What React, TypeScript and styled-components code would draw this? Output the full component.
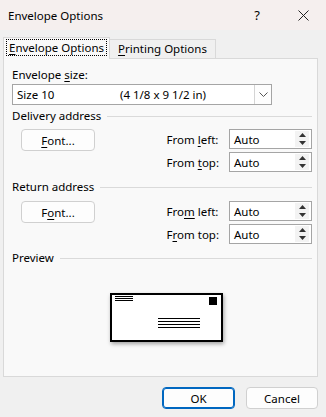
import React from 'react';
import styled, { createGlobalStyle } from 'styled-components';

const GlobalStyle = createGlobalStyle`
  html, body {
    margin: 0;
    padding: 0;
    background: #f0f0f0;
  }
  * {
    box-sizing: border-box;
  }
`;

const Window = styled.div`
  width: 326px;
  height: 417px;
  background: #f0f0f0;
  font-family: "Noto Sans", "Open Sans", sans-serif;
  font-size: 11.5px;
  color: #000;
  display: flex;
  flex-direction: column;
  overflow: hidden;
`;

const TitleBar = styled.div`
  height: 30px;
  flex: none;
  display: flex;
  align-items: center;
  background: #f5efee;
  padding-left: 8px;
`;

const Title = styled.div`
  flex: 1;
  font-size: 11.5px;
`;

const TitleButton = styled.div`
  width: 46px;
  height: 30px;
  display: flex;
  align-items: center;
  justify-content: center;
  font-size: 13px;
`;

const Body = styled.div`
  flex: 1;
  display: flex;
  flex-direction: column;
  padding: 7px 8px 0 3px;
`;

const TabStrip = styled.div`
  display: flex;
  align-items: flex-end;
  height: 21px;
  position: relative;
  z-index: 1;
`;

const Tab = styled.div<{ $active?: boolean }>`
  height: ${p => (p.$active ? '22px' : '19px')};
  margin-bottom: ${p => (p.$active ? '-1px' : '0')};
  padding: ${p => (p.$active ? '2px 3px 0 3px' : '1px 6px 0 6px')};
  border: 1px solid #d9d9d9;
  border-bottom: none;
  border-left: ${p => (p.$active ? '1px solid #d9d9d9' : 'none')};
  background: ${p => (p.$active ? '#f9f9f9' : '#f0f0f0')};
  display: flex;
  align-items: flex-start;
`;

const TabLabel = styled.span<{ $focus?: boolean }>`
  padding: 0 2px;
  line-height: 15px;
  outline: ${p => (p.$focus ? '1px dotted #000' : 'none')};
`;

const Key = styled.span`
  text-decoration: underline;
  text-underline-offset: 2px;
`;

const Panel = styled.div`
  height: 319px;
  border: 1px solid #d9d9d9;
  background: #f9f9f9;
  padding: 8px 5px 0 8px;
  display: flex;
  flex-direction: column;
`;

const Label = styled.div`
  line-height: 16px;
  height: 16px;
`;

const Select = styled.div`
  margin-top: 1px;
  width: 260px;
  height: 21px;
  border: 1px solid #a5a5a5;
  background: #fff;
  display: flex;
  align-items: center;
  padding-left: 4px;
`;

const SelectText = styled.div<{ $width?: number }>`
  width: ${p => (p.$width ? `${p.$width}px` : 'auto')};
  flex: ${p => (p.$width ? 'none' : '1')};
  white-space: nowrap;
`;

const DropButton = styled.div`
  width: 17px;
  height: 19px;
  border-left: 1px solid #d4d4d4;
  background: #fdfdfd;
  display: flex;
  align-items: center;
  justify-content: center;
`;

const GroupHeader = styled.div<{ $top: number }>`
  margin-top: ${p => p.$top}px;
  height: 16px;
  line-height: 16px;
  display: flex;
  align-items: center;
  gap: 6px;

  &::after {
    content: '';
    flex: 1;
    height: 1px;
    background: #dadada;
  }
`;

const Section = styled.div<{ $top: number }>`
  margin-top: ${p => p.$top}px;
  display: flex;
  justify-content: space-between;
  align-items: flex-start;
`;

const PushButton = styled.div<{ $primary?: boolean; $width?: number }>`
  width: ${p => p.$width ?? 74}px;
  height: 22px;
  border: 1px solid ${p => (p.$primary ? '#0067c0' : '#d0d0d0')};
  border-radius: 4px;
  background: #fdfdfd;
  display: flex;
  align-items: center;
  justify-content: center;
  box-shadow: ${p => (p.$primary ? 'inset 0 0 0 1px #0067c0' : 'none')};
`;

const FontButton = styled(PushButton)`
  margin-left: 9px;
`;

const SpinGrid = styled.div`
  display: grid;
  grid-template-columns: auto 83px;
  column-gap: 10px;
  row-gap: 3px;
  align-items: center;
`;

const SpinLabel = styled.div`
  white-space: nowrap;
`;

const SpinBox = styled.div`
  height: 20px;
  border: 1px solid #a5a5a5;
  background: #fff;
  display: flex;
  align-items: center;
  padding-left: 4px;
`;

const SpinText = styled.div`
  flex: 1;
`;

const SpinArrows = styled.div`
  width: 14px;
  height: 16px;
  margin-right: 2px;
  background: #f3f3f3;
  display: flex;
  flex-direction: column;
  align-items: center;
  justify-content: space-around;
`;

const Preview = styled.div`
  margin-top: 27px;
  margin-left: 98px;
  width: 113px;
  height: 49px;
  border: 2px solid #000;
  background: #fff;
  box-shadow: 1px 2px 4px rgba(0, 0, 0, 0.35);
`;

const Footer = styled.div`
  display: flex;
  justify-content: flex-end;
  gap: 11px;
  padding-top: 10px;
`;

const UpDown: React.FC = () => (
  <SpinArrows>
    <svg width="7" height="4" viewBox="0 0 7 4">
      <path d="M3.5 0 L7 4 L0 4 Z" fill="#333" />
    </svg>
    <svg width="7" height="4" viewBox="0 0 7 4">
      <path d="M0 0 L7 0 L3.5 4 Z" fill="#333" />
    </svg>
  </SpinArrows>
);

const Spin: React.FC<{ value: string }> = ({ value }) => (
  <SpinBox>
    <SpinText>{value}</SpinText>
    <UpDown />
  </SpinBox>
);

const EnvelopeDrawing: React.FC = () => (
  <svg width="109" height="45" viewBox="0 0 109 45" style={{ display: 'block' }}>
    <line x1="3" y1="1.5" x2="21" y2="1.5" stroke="#000" strokeWidth="1" />
    <line x1="3" y1="3.5" x2="21" y2="3.5" stroke="#000" strokeWidth="1" />
    <line x1="3" y1="5.5" x2="21" y2="5.5" stroke="#000" strokeWidth="1" />
    <rect x="97" y="2" width="8" height="8" fill="#000" />
    <line x1="46" y1="23.5" x2="88" y2="23.5" stroke="#000" strokeWidth="1" />
    <line x1="46" y1="26.5" x2="88" y2="26.5" stroke="#000" strokeWidth="1" />
    <line x1="46" y1="29.5" x2="88" y2="29.5" stroke="#000" strokeWidth="1" />
    <line x1="46" y1="32.5" x2="88" y2="32.5" stroke="#000" strokeWidth="1" />
  </svg>
);

const App: React.FC = () => {
  return (
    <>
      <GlobalStyle />
      <Window>
        <TitleBar>
          <Title>Envelope Options</Title>
          <TitleButton>?</TitleButton>
          <TitleButton>
            <svg width="11" height="11" viewBox="0 0 11 11">
              <path d="M0.5 0.5 L10.5 10.5 M10.5 0.5 L0.5 10.5" stroke="#222" strokeWidth="1" />
            </svg>
          </TitleButton>
        </TitleBar>
        <Body>
          <TabStrip>
            <Tab $active>
              <TabLabel $focus><Key>E</Key>nvelope Options</TabLabel>
            </Tab>
            <Tab>
              <TabLabel><Key>P</Key>rinting Options</TabLabel>
            </Tab>
          </TabStrip>
          <Panel>
            <Label>Envelope <Key>s</Key>ize:</Label>
            <Select>
              <SelectText $width={103}>Size 10</SelectText>
              <SelectText>(4 1/8 x 9 1/2 in)</SelectText>
              <DropButton>
                <svg width="9" height="5" viewBox="0 0 9 5">
                  <path d="M0.5 0.5 L4.5 4.5 L8.5 0.5" stroke="#555" strokeWidth="1" fill="none" />
                </svg>
              </DropButton>
            </Select>

            <GroupHeader $top={3}>Delivery address</GroupHeader>
            <Section $top={5}>
              <FontButton><Key>F</Key>ont...</FontButton>
              <SpinGrid>
                <SpinLabel>From <Key>l</Key>eft:</SpinLabel>
                <Spin value="Auto" />
                <SpinLabel>From <Key>t</Key>op:</SpinLabel>
                <Spin value="Auto" />
              </SpinGrid>
            </Section>

            <GroupHeader $top={7}>Return address</GroupHeader>
            <Section $top={6}>
              <FontButton>F<Key>o</Key>nt...</FontButton>
              <SpinGrid>
                <SpinLabel>Fro<Key>m</Key> left:</SpinLabel>
                <Spin value="Auto" />
                <SpinLabel>F<Key>r</Key>om top:</SpinLabel>
                <Spin value="Auto" />
              </SpinGrid>
            </Section>

            <GroupHeader $top={6}>Preview</GroupHeader>
            <Preview>
              <EnvelopeDrawing />
            </Preview>
          </Panel>
          <Footer>
            <PushButton $primary $width={73}>OK</PushButton>
            <PushButton $width={72}>Cancel</PushButton>
          </Footer>
        </Body>
      </Window>
    </>
  );
};

export default App;
